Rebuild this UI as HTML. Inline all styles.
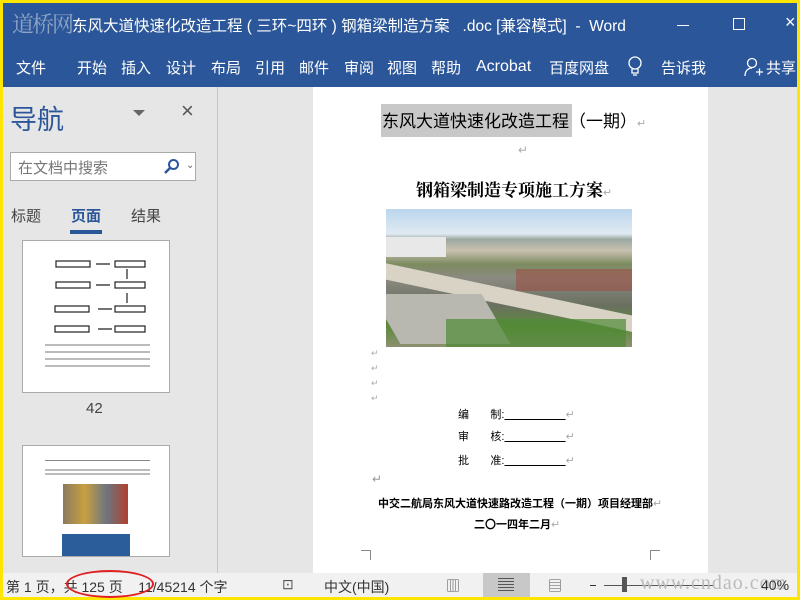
<!DOCTYPE html>
<html><head><meta charset="utf-8"><style>
*{margin:0;padding:0;box-sizing:border-box}
body{width:800px;height:600px;overflow:hidden;background:#ffe600;font-family:"Liberation Sans","Noto Sans CJK SC",sans-serif;position:relative}
.a{position:absolute}
.t{white-space:nowrap}
.tab{position:absolute;top:57px;font-size:15px;color:#fff;white-space:nowrap}
</style></head><body>
<div class="a" style="left:3px;top:3px;width:794px;height:594px;background:#e6e6e6"></div>
<div class="a" style="left:3px;top:3px;width:794px;height:84px;background:#2b579a"></div>
<div class="a t" style="left:12px;top:8px;font:22px 'Noto Serif CJK SC',serif;color:#8fa3c4;letter-spacing:-2px">道桥网</div>
<div class="a t" style="left:72px;top:14px;font-size:15.5px;color:#fff">东风大道快速化改造工程 ( 三环~四环 ) 钢箱梁制造方案 &nbsp;&nbsp;.doc [兼容模式] &nbsp;- &nbsp;Word</div>
<div class="a" style="left:677px;top:25px;width:12px;height:1px;background:#fff"></div>
<div class="a" style="left:733px;top:18px;width:12px;height:12px;border:1px solid #fff"></div>
<div class="a t" style="left:785px;top:12px;font-size:18px;color:#fff">×</div>
<div class="tab" style="left:16px">文件</div>
<div class="tab" style="left:77px">开始</div>
<div class="tab" style="left:121px">插入</div>
<div class="tab" style="left:166px">设计</div>
<div class="tab" style="left:211px">布局</div>
<div class="tab" style="left:255px">引用</div>
<div class="tab" style="left:299px">邮件</div>
<div class="tab" style="left:344px">审阅</div>
<div class="tab" style="left:387px">视图</div>
<div class="tab" style="left:431px">帮助</div>
<div class="tab" style="left:476px;top:58px;font-size:16px">Acrobat</div>
<div class="tab" style="left:549px">百度网盘</div>
<svg class="a" style="left:627px;top:55px" width="16" height="22"><circle cx="8" cy="8" r="6" fill="none" stroke="#fff" stroke-width="1.3"/><path d="M5 14v4h6v-4M6 20h4" stroke="#fff" fill="none" stroke-width="1.3"/></svg>
<div class="tab" style="left:661px">告诉我</div>
<svg class="a" style="left:744px;top:57px" width="20" height="22"><circle cx="8" cy="6" r="4.5" fill="none" stroke="#fff" stroke-width="1.3"/><path d="M1 19c0-5 3-8 7-8M12 15h7M15.5 11.5v7" stroke="#fff" fill="none" stroke-width="1.3"/></svg>
<div class="tab" style="left:766px">共享</div>
<div class="a" style="left:217px;top:87px;width:1px;height:486px;background:#c6c6c6"></div>
<div class="a t" style="left:10px;top:98px;font-size:27px;color:#2b579a">导航</div>
<div class="a" style="left:133px;top:110px;border-left:6px solid transparent;border-right:6px solid transparent;border-top:6px solid #666"></div>
<div class="a t" style="left:181px;top:98px;font-size:22px;color:#555">×</div>
<div class="a" style="left:10px;top:152px;width:186px;height:29px;background:#fff;border:1px solid #aaa"></div>
<div class="a t" style="left:18px;top:157px;font-size:15px;color:#777">在文档中搜索</div>
<svg class="a" style="left:164px;top:158px" width="16" height="16"><circle cx="9.5" cy="6.5" r="4.5" fill="none" stroke="#2b579a" stroke-width="2"/><path d="M6 10l-5 5" stroke="#2b579a" stroke-width="2.5"/></svg>
<div class="a t" style="left:186px;top:160px;font-size:10px;color:#666">⌄</div>
<div class="a t" style="left:11px;top:205px;font-size:15px;color:#444">标题</div>
<div class="a t" style="left:71px;top:205px;font-size:15px;color:#2b579a;font-weight:bold">页面</div>
<div class="a t" style="left:131px;top:205px;font-size:15px;color:#444">结果</div>
<div class="a" style="left:70px;top:230px;width:32px;height:4px;background:#2b579a"></div>
<div class="a" style="left:22px;top:240px;width:148px;height:153px;background:#fff;border:1px solid #aaa;overflow:hidden">
 <svg width="148" height="153">
  <g stroke="#222" fill="none" stroke-width="1.2">
   <rect x="33" y="20" width="34" height="6"/><rect x="92" y="20" width="30" height="6"/>
   <rect x="33" y="41" width="34" height="6"/><rect x="92" y="41" width="30" height="6"/>
   <rect x="32" y="65" width="34" height="6"/><rect x="92" y="65" width="30" height="6"/>
   <rect x="32" y="85" width="34" height="6"/><rect x="92" y="85" width="30" height="6"/>
   <path d="M73 23h14M73 44h14M75 68h14M75 88h14M104 28v10M104 52v10"/>
  </g>
  <g fill="#bbb"><rect x="22" y="103" width="105" height="2"/><rect x="22" y="110" width="105" height="2"/><rect x="22" y="117" width="105" height="2"/><rect x="22" y="124" width="105" height="2"/></g>
 </svg>
</div>
<div class="a t" style="left:86px;top:400px;font-size:15px;color:#444">42</div>
<div class="a" style="left:22px;top:445px;width:148px;height:112px;background:#fff;border:1px solid #aaa;overflow:hidden">
 <div style="margin:14px 0 0 22px;width:105px;height:1px;background:#888"></div>
 <div style="margin:6px 0 0 22px;width:105px;height:8px;background:repeating-linear-gradient(#fff 0 2px,#bbb 2px 4px)"></div>
 <div style="margin:9px 0 0 40px;width:65px;height:40px;background:linear-gradient(90deg,#8a7a60,#c9a040,#6d7580,#b04030)"></div>
 <div style="margin:10px 0 0 39px;width:68px;height:40px;background:#2b5d9a"></div>
</div>
<div class="a" style="left:313px;top:87px;width:395px;height:486px;background:#fff"></div>
<div class="a" style="left:381px;top:104px;width:191px;height:33px;background:#c8c8c8"></div>
<div class="a t" style="left:382px;top:107px;font-size:17px;color:#000">东风大道快速化改造工程（一期）<span style="font-size:11px;color:#aaa">↵</span></div>
<div class="a t" style="left:518px;top:143px;font-size:12px;color:#aaa">↵</div>
<div class="a t" style="left:416px;top:176px;font:bold 17px 'Noto Serif CJK SC','Noto Sans CJK SC',serif;color:#000">钢箱梁制造专项施工方案<span style="font-size:11px;color:#aaa;font-weight:normal">↵</span></div>
<div class="a" style="left:386px;top:209px;width:246px;height:138px;overflow:hidden;background:linear-gradient(#bcd6ee 0,#dfeaf2 18%,#9aa8a0 22%,#c9c1b0 30%,#7c8b60 40%,#8b8a82 50%,#6a7060 70%,#5e8a3c 85%,#8c9070 100%)">
 <div class="a" style="left:0;top:28px;width:60px;height:20px;background:#e8e8e8"></div>
 <div class="a" style="left:-20px;top:50px;width:300px;height:16px;background:#d8d3c5;transform:rotate(12deg);transform-origin:0 0"></div>
 <div class="a" style="left:0;top:85px;width:110px;height:50px;background:#b8b8b0;transform:skewX(30deg)"></div>
 <div class="a" style="left:130px;top:60px;width:116px;height:22px;background:#a0463a;opacity:.5"></div>
 <div class="a" style="left:60px;top:110px;width:180px;height:28px;background:#4f8a34;opacity:.7"></div>
</div>
<div class="a t" style="left:371px;top:346px;font-size:9px;color:#aaa;line-height:15px">↵<br>↵<br>↵<br>↵</div>
<div class="a t" style="left:458px;top:404px;font-size:11px;color:#000;line-height:22px">编&nbsp;&nbsp;&nbsp;&nbsp;&nbsp;&nbsp; 制:<u>&nbsp;&nbsp;&nbsp;&nbsp;&nbsp;&nbsp;&nbsp;&nbsp;&nbsp;&nbsp;&nbsp;&nbsp;&nbsp;&nbsp;&nbsp;&nbsp;&nbsp;&nbsp;&nbsp;&nbsp;</u><span style="color:#aaa">↵</span><br>审&nbsp;&nbsp;&nbsp;&nbsp;&nbsp;&nbsp; 核:<u>&nbsp;&nbsp;&nbsp;&nbsp;&nbsp;&nbsp;&nbsp;&nbsp;&nbsp;&nbsp;&nbsp;&nbsp;&nbsp;&nbsp;&nbsp;&nbsp;&nbsp;&nbsp;&nbsp;&nbsp;</u><span style="color:#aaa">↵</span></div>
<div class="a t" style="left:458px;top:452px;font-size:11px;color:#000">批&nbsp;&nbsp;&nbsp;&nbsp;&nbsp;&nbsp; 准:<u>&nbsp;&nbsp;&nbsp;&nbsp;&nbsp;&nbsp;&nbsp;&nbsp;&nbsp;&nbsp;&nbsp;&nbsp;&nbsp;&nbsp;&nbsp;&nbsp;&nbsp;&nbsp;&nbsp;&nbsp;</u><span style="color:#aaa">↵</span></div>
<div class="a t" style="left:372px;top:472px;font-size:12px;color:#999">↵</div>
<div class="a t" style="left:378px;top:495px;font-size:11px;font-weight:bold;color:#000">中交二航局东风大道快速路改造工程（一期）项目经理部<span style="color:#aaa;font-weight:normal">↵</span></div>
<div class="a t" style="left:474px;top:516px;font-size:11px;font-weight:bold;color:#000">二〇一四年二月<span style="color:#aaa;font-weight:normal">↵</span></div>
<div class="a" style="left:361px;top:550px;width:10px;height:10px;border-top:1px solid #888;border-right:1px solid #888"></div>
<div class="a" style="left:650px;top:550px;width:10px;height:10px;border-top:1px solid #888;border-left:1px solid #888"></div>
<div class="a" style="left:3px;top:573px;width:794px;height:24px;background:#f1f1f1"></div>
<div class="a t" style="left:6px;top:577px;font-size:14px;color:#333">第 1 页，共 125 页&nbsp;&nbsp;&nbsp; 11/45214 个字</div>
<div class="a" style="left:66px;top:570px;width:88px;height:28px;border:2px solid #e02020;border-radius:50%"></div>
<div class="a t" style="left:282px;top:576px;font-size:14px;color:#555">⊡</div>
<div class="a t" style="left:324px;top:577px;font-size:14px;color:#333">中文(中国)</div>
<div class="a t" style="left:446px;top:576px;font-size:14px;color:#555">▥</div>
<div class="a" style="left:483px;top:573px;width:47px;height:24px;background:#c8c8c8"></div>
<div class="a" style="left:498px;top:578px;width:16px;height:14px;background:repeating-linear-gradient(#555 0 1px,transparent 1px 3px)"></div>
<div class="a t" style="left:548px;top:576px;font-size:14px;color:#555">▤</div>
<div class="a" style="left:590px;top:585px;width:6px;height:1px;background:#333"></div>
<div class="a" style="left:604px;top:585px;width:110px;height:1px;background:#555"></div>
<div class="a" style="left:622px;top:577px;width:5px;height:15px;background:#555"></div>
<div class="a t" style="left:640px;top:572px;font:20px 'Liberation Serif',serif;color:#bbb;letter-spacing:1px">www.cndao.com</div>
<div class="a t" style="left:761px;top:577px;font-size:14px;color:#333">40%</div>
</body></html>
